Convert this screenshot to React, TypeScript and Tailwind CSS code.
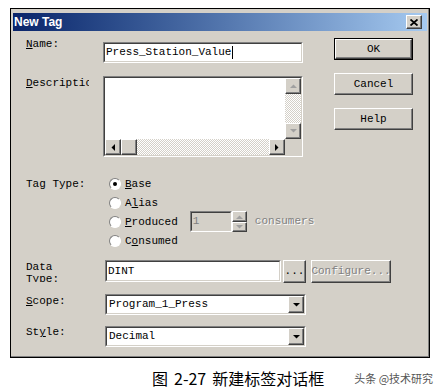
import React from 'react';

const mono = { fontFamily: '"Liberation Mono", "Courier New", monospace' };

function Raised({ className = '', children }: { className?: string; children?: React.ReactNode }) {
  return (
    <div
      className={`flex shrink-0 items-center justify-center bg-[#d4d0c8] border border-t-white border-l-white border-r-[#404040] border-b-[#404040] shadow-[inset_-1px_-1px_0_#808080] ${className}`}
    >
      {children}
    </div>
  );
}

function Sunken({ className = '', children }: { className?: string; children?: React.ReactNode }) {
  return (
    <div
      className={`shrink-0 border border-t-[#808080] border-l-[#808080] border-r-white border-b-white ${className}`}
    >
      <div className="h-full w-full overflow-hidden border border-t-[#404040] border-l-[#404040] border-r-[#d4d0c8] border-b-[#d4d0c8]">
        {children}
      </div>
    </div>
  );
}

function Arrow({ dir, color = '#000' }: { dir: 'up' | 'down' | 'left' | 'right'; color?: string }) {
  const pts = {
    up: '0,4 3.5,0.5 7,4',
    down: '0,0 7,0 3.5,3.5',
    left: '4,0 4,7 0.5,3.5',
    right: '0,0 0,7 3.5,3.5',
  }[dir];
  const vertical = dir === 'up' || dir === 'down';
  return (
    <svg width={vertical ? 7 : 4} height={vertical ? 4 : 7} viewBox={vertical ? '0 0 7 4' : '0 0 4 7'}>
      <polygon points={pts} fill={color} />
    </svg>
  );
}

function Label({ children, className = '' }: { children: React.ReactNode; className?: string }) {
  return <div className={`w-[77px] shrink-0 text-[11px] leading-[12px] text-black ${className}`}>{children}</div>;
}

function Radio({ checked, children }: { checked?: boolean; children: React.ReactNode }) {
  return (
    <div className="flex h-[19px] shrink-0 items-center">
      <div className="flex h-[12px] w-[12px] items-center justify-center rounded-full border border-t-[#808080] border-l-[#808080] border-r-white border-b-white bg-white">
        {checked && <div className="h-[4px] w-[4px] rounded-full bg-black" />}
      </div>
      <span className="ml-[4px] whitespace-nowrap text-[11px] leading-[12px]">{children}</span>
    </div>
  );
}

function Combo({ value }: { value: string }) {
  return (
    <Sunken className="h-[21px] w-[201px]">
      <div className="flex h-full bg-white">
        <div className="flex-1 pl-[2px] text-[11px] leading-[17px]">{value}</div>
        <Raised className="h-[17px] w-[16px]">
          <Arrow dir="down" />
        </Raised>
      </div>
    </Sunken>
  );
}

const dither = 'bg-[repeating-conic-gradient(#d4d0c8_0_25%,#ffffff_0_50%)] bg-[length:2px_2px]';

export default function App() {
  return (
    <div className="h-[391px] w-[438px] overflow-hidden bg-white text-black" style={mono}>
      <div className="ml-[10px] mt-[8px] h-[350px] w-[420px] border border-black bg-[#d4d0c8] px-[2px] pt-[4px] shadow-[inset_-1px_-1px_0_#808080]">
        {/* title bar */}
        <div className="flex h-[18px] items-center justify-between bg-linear-to-r from-[#0a246a] to-[#a6caf0] pl-[1px] pr-[5px]">
          <span
            className="text-[12px] font-bold leading-none text-white"
            style={{ fontFamily: '"Liberation Sans", Arial, sans-serif' }}
          >
            New Tag
          </span>
          <Raised className="h-[14px] w-[16px]">
            <svg width="8" height="7" viewBox="0 0 8 7">
              <path d="M0.5 0.5 L7.5 6.5 M7.5 0.5 L0.5 6.5" stroke="#000" strokeWidth="1.8" />
            </svg>
          </Raised>
        </div>

        <div className="pl-[13px]">
          {/* name + description with the button column */}
          <div className="flex">
            <div className="w-[308px] shrink-0">
              <div className="mt-[7px] flex">
                <Label>
                  <u>N</u>ame:
                </Label>
                <Sunken className="mt-[4px] h-[21px] w-[200px]">
                  <div className="flex h-full items-center bg-white pl-[1px] text-[11px]">
                    Press_Station_Value<span className="ml-[1px] h-[13px] w-[1px] bg-black" />
                  </div>
                </Sunken>
              </div>

              <div className="mt-[13px] flex">
                <Label className="mt-[1px]">
                  <div className="w-[63px] overflow-hidden whitespace-nowrap">
                    <u>D</u>escription
                  </div>
                </Label>
                <Sunken className="h-[81px] w-[200px]">
                  <div className="grid h-full grid-cols-[1fr_16px] grid-rows-[1fr_16px]">
                    <div className="bg-white" />
                    <div className="flex flex-col">
                      <Raised className="h-[16px] w-[16px]">
                        <Arrow dir="up" color="#a0a0a0" />
                      </Raised>
                      <div className={`flex-1 ${dither}`} />
                      <Raised className="h-[16px] w-[16px]">
                        <Arrow dir="down" color="#a0a0a0" />
                      </Raised>
                    </div>
                    <div className="flex">
                      <Raised className="h-[16px] w-[16px]">
                        <Arrow dir="left" />
                      </Raised>
                      <Raised className="h-[16px] w-[16px]" />
                      <div className={`flex-1 ${dither}`} />
                      <Raised className="h-[16px] w-[16px]">
                        <Arrow dir="right" />
                      </Raised>
                    </div>
                    <div className="bg-[#d4d0c8]" />
                  </div>
                </Sunken>
              </div>
            </div>

            <div className="mt-[7px] flex flex-col gap-[13px]">
              <div className="h-[22px] w-[79px] border border-black">
                <Raised className="h-full w-full text-[11px]">OK</Raised>
              </div>
              <Raised className="h-[22px] w-[79px] text-[11px]">Cancel</Raised>
              <Raised className="h-[22px] w-[79px] text-[11px]">Help</Raised>
            </div>
          </div>

          {/* tag type */}
          <div className="mt-[17px] flex">
            <Label className="mt-[4px]">Tag Type:</Label>
            <div className="ml-[6px] flex flex-col">
              <Radio checked>
                <u>B</u>ase
              </Radio>
              <Radio>
                A<u>l</u>ias
              </Radio>
              <div className="flex h-[19px] items-center">
                <Radio>
                  <u>P</u>roduced
                </Radio>
                <div className="ml-[12px] flex">
                  <Sunken className="h-[21px] w-[42px]">
                    <div className="h-full bg-[#d4d0c8] pl-[1px] text-[11px] leading-[17px] text-[#808080]">1</div>
                  </Sunken>
                  <div className="flex flex-col">
                    <Raised className="h-[11px] w-[15px]">
                      <Arrow dir="up" color="#a0a0a0" />
                    </Raised>
                    <Raised className="h-[10px] w-[15px]">
                      <Arrow dir="down" color="#a0a0a0" />
                    </Raised>
                  </div>
                  <span className="ml-[8px] self-center text-[11px] text-[#808080] [text-shadow:1px_1px_0_#fff]">
                    consumers
                  </span>
                </div>
              </div>
              <Radio>
                C<u>o</u>nsumed
              </Radio>
            </div>
          </div>

          {/* data type */}
          <div className="mt-[10px] flex">
            <Label className="mt-[1px] h-[21px] overflow-hidden">
              Data
              <br />
              Type:
            </Label>
            <Sunken className="ml-[2px] h-[22px] w-[176px]">
              <div className="h-full bg-white pl-[1px] text-[11px] leading-[18px]">DINT</div>
            </Sunken>
            <Raised className="ml-[2px] h-[23px] w-[23px] text-[11px]">...</Raised>
            <Raised className="ml-[5px] h-[23px] w-[80px] text-[11px] text-[#808080] [text-shadow:1px_1px_0_#fff]">
              Configure...
            </Raised>
          </div>

          <div className="mt-[11px] flex">
            <Label className="mt-[1px]">
              <u>S</u>cope:
            </Label>
            <div className="ml-[2px]">
              <Combo value="Program_1_Press" />
            </div>
          </div>

          <div className="mt-[11px] flex">
            <Label>
              St<u>y</u>le:
            </Label>
            <div className="ml-[2px]">
              <Combo value="Decimal" />
            </div>
          </div>
        </div>
      </div>

      <div className="mt-[8px] flex items-center" style={{ fontFamily: '"Noto Sans CJK SC", sans-serif' }}>
        <span className="ml-[152px] flex text-[16px] leading-[24px] text-black">
          <span>图</span>
          <span className="ml-[6px]">2-27</span>
          <span className="ml-[6px]">新建标签对话框</span>
        </span>
        <span className="ml-[30px] text-[11px] text-[#555]">头条 @技术研究</span>
      </div>
    </div>
  );
}
